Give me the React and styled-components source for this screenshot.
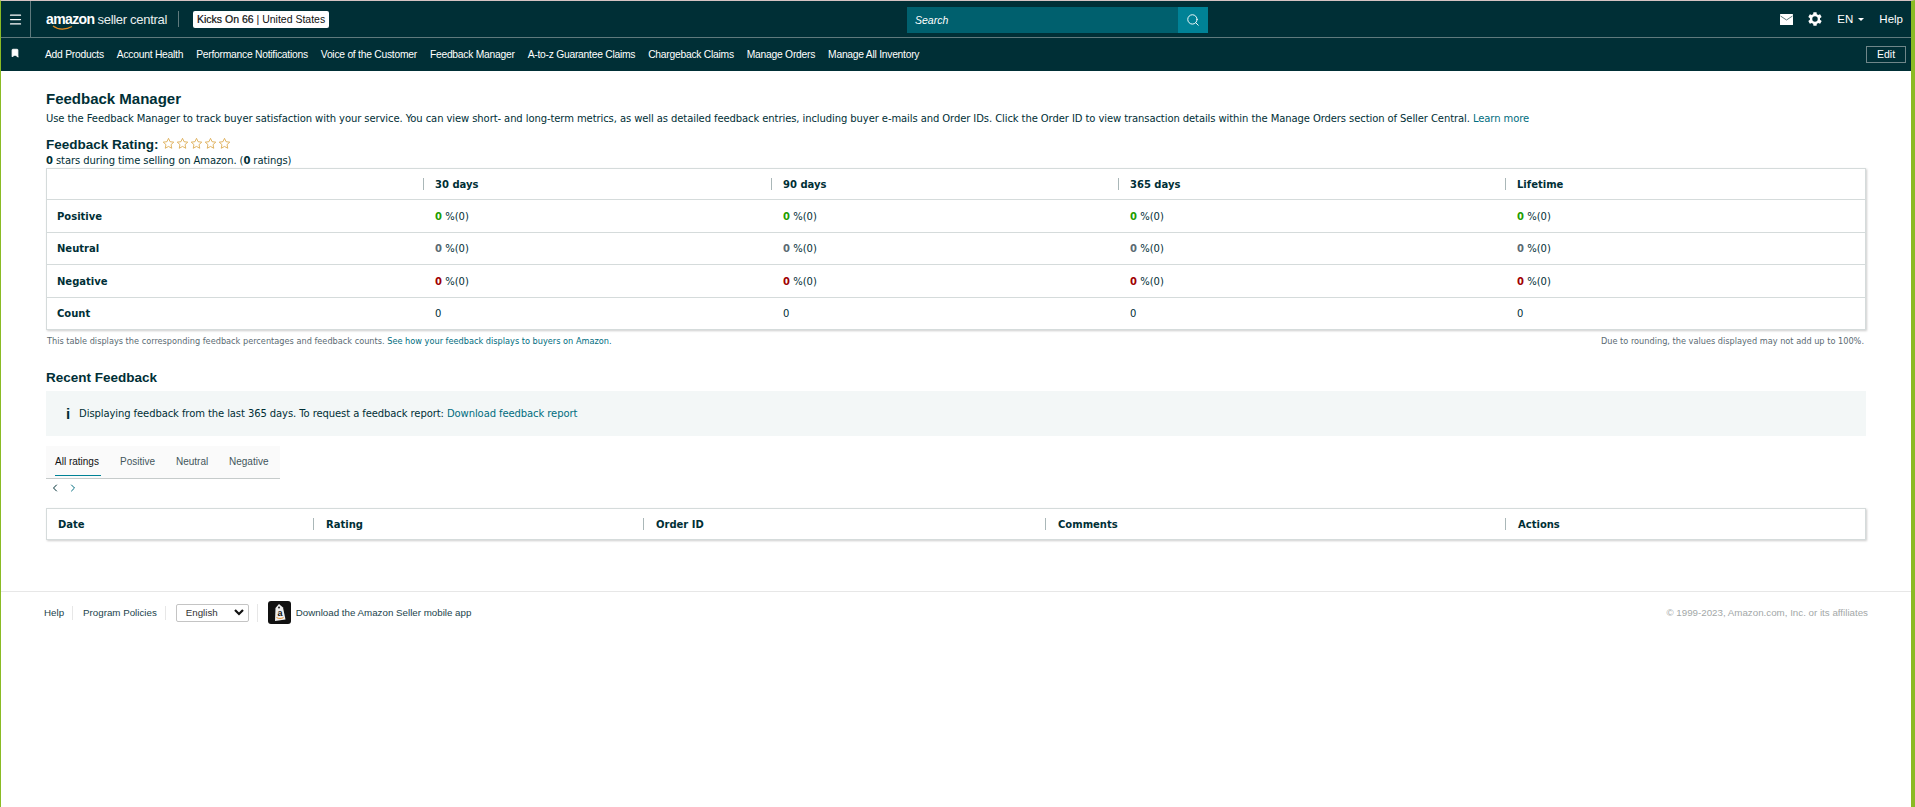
import React from "react";
import styled, { createGlobalStyle } from "styled-components";
import { Menu, Bookmark, Search, ChevronLeft, ChevronRight } from "lucide-react";

const GlobalStyle = createGlobalStyle`
  html, body {
    margin: 0;
    padding: 0;
    background: #fff;
  }
  body {
    font-family: "DejaVu Sans", Verdana, sans-serif;
    color: #002f36;
  }
`;

const Page = styled.div`
  box-sizing: border-box;
  width: 1915px;
  height: 807px;
  overflow: hidden;
  border-top: 1px solid #d5c3c3;
  border-left: 1px solid #8abb24;
  border-right: 4px solid #8abb24;
  background: #fff;
`;

const TopBar = styled.header`
  display: flex;
  align-items: center;
  height: 36px;
  background: #002f36;
  border-bottom: 1px solid #5f7a7d;
  font-family: "Liberation Sans", Arial, sans-serif;
  color: #fff;
`;

const TopLeft = styled.div`
  display: flex;
  align-items: center;
  flex: none;
  width: 906px;
`;

const MenuCell = styled.div`
  display: flex;
  align-items: center;
  justify-content: center;
  width: 29px;
  height: 36px;
  border-right: 1px solid #5f7a7d;
`;

const Logo = styled.div`
  position: relative;
  display: flex;
  align-items: baseline;
  gap: 3px;
  margin-left: 15px;
  width: 118px;
  height: 24px;
  white-space: nowrap;
`;

const LogoBold = styled.span`
  font-size: 14px;
  font-weight: 700;
  letter-spacing: -0.6px;
  line-height: 24px;
`;

const LogoThin = styled.span`
  font-size: 13px;
  letter-spacing: -0.3px;
  color: #e8eeee;
  line-height: 24px;
`;

const LogoSmile = styled.svg`
  position: absolute;
  left: 6px;
  top: 18px;
`;

const LogoDivider = styled.div`
  width: 1px;
  height: 16px;
  margin-left: 14px;
  background: #5f7a7d;
`;

const AccountPill = styled.div`
  margin-left: 14px;
  padding: 0 4px;
  height: 17px;
  line-height: 17px;
  background: #fff;
  border-radius: 2px;
  color: #0f1111;
  font-size: 10.5px;
  white-space: nowrap;
  b {
    font-weight: 400;
    -webkit-text-stroke: 0.2px #0f1111;
  }
`;

const SearchBox = styled.div`
  display: flex;
  flex: none;
  width: 301px;
  height: 26px;
  margin-top: 1px;
  background: #00606e;
`;

const SearchText = styled.span`
  flex: 1;
  padding-left: 8px;
  font-size: 10.5px;
  font-style: italic;
  line-height: 26px;
`;

const SearchButton = styled.div`
  display: flex;
  align-items: center;
  justify-content: center;
  width: 30px;
  background: #008296;
`;

const TopRight = styled.div`
  display: flex;
  align-items: center;
  gap: 15px;
  margin-left: auto;
  padding-right: 8px;
  font-size: 11.5px;
`;

const Lang = styled.span`
  display: flex;
  align-items: center;
  gap: 5px;
`;

const Caret = styled.span`
  width: 0;
  height: 0;
  border-left: 3px solid transparent;
  border-right: 3px solid transparent;
  border-top: 3px solid #fff;
`;

const NavBar = styled.nav`
  display: flex;
  align-items: center;
  height: 33px;
  background: #002f36;
  font-family: "Liberation Sans", Arial, sans-serif;
  font-size: 10.3px;
  color: #fff;
`;

const NavMark = styled.div`
  display: flex;
  justify-content: center;
  width: 28px;
  margin-right: 16px;
  margin-top: -3px;
`;

const NavItems = styled.div`
  display: flex;
  gap: 13px;
  white-space: nowrap;
  letter-spacing: -0.25px;
`;

const EditButton = styled.div`
  box-sizing: border-box;
  margin-left: auto;
  margin-right: 5px;
  width: 40px;
  height: 17px;
  line-height: 15px;
  text-align: center;
  border: 1px solid #6f8689;
  font-size: 10.5px;
`;

const Main = styled.main`
  padding: 0 45px 0 45px;
`;

const PageTitle = styled.h1`
  margin: 19px 0 0;
  font-family: "Liberation Sans", Arial, sans-serif;
  font-size: 15px;
  font-weight: 700;
  line-height: 18px;
`;

const BodyText = styled.div`
  font-size: 10px;
  line-height: 13px;
  letter-spacing: -0.09px;
  white-space: nowrap;
`;

const Intro = styled(BodyText)`
  margin-top: 4px;
`;

const Link = styled.a`
  color: #006d80;
`;

const RatingHeading = styled.div`
  display: flex;
  align-items: center;
  gap: 3px;
  margin-top: 11px;
  height: 17px;
`;

const RatingTitle = styled.h2`
  margin: 0;
  font-family: "Liberation Sans", Arial, sans-serif;
  font-size: 13.5px;
  font-weight: 700;
`;

const Stars = styled.div`
  display: flex;
  gap: 1px;
  margin-top: -3px;
`;

const RatingNote = styled(BodyText)`
  margin-top: 1px;
`;

const Table = styled.div`
  box-sizing: border-box;
  margin-top: 1px;
  border: 1px solid #d5dbdb;
  box-shadow: 1px 1px 2px rgba(0, 0, 0, 0.2);
  background: #fff;
`;

const Row = styled.div`
  display: grid;
  grid-template-columns: ${(props) => props.$columns};
  align-items: center;
  height: ${(props) => props.$height}px;
  border-top: ${(props) => (props.$first ? "none" : "1px solid #d5dbdb")};
  font-size: 10px;
`;

const HeadCell = styled.div`
  display: flex;
  align-items: center;
  height: 12px;
  padding-left: ${(props) => props.$pad || 11}px;
  font-weight: 700;
  border-left: ${(props) => (props.$first ? "none" : "1px solid #aab7b8")};
`;

const LabelCell = styled.div`
  padding-left: 10px;
  font-weight: 700;
`;

const ValueCell = styled.div`
  padding-left: 12px;
`;

const Zero = styled.b`
  color: ${(props) => props.$color};
`;

const NoteRow = styled.div`
  display: flex;
  justify-content: space-between;
  margin-top: 5px;
  padding: 0 2px 0 1px;
  font-size: 8.2px;
  line-height: 12px;
  color: #5b6b73;
`;

const SectionTitle = styled.h2`
  margin: 22px 0 0;
  font-family: "Liberation Sans", Arial, sans-serif;
  font-size: 13.5px;
  font-weight: 700;
  line-height: 17px;
`;

const InfoBox = styled(BodyText)`
  display: flex;
  align-items: center;
  gap: 9px;
  height: 45px;
  margin-top: 5px;
  padding-left: 20px;
  background: #f3f7f7;
`;

const InfoMark = styled.span`
  font-family: "Liberation Sans", Arial, sans-serif;
  font-size: 15px;
  font-weight: 700;
  color: #002f36;
`;

const Tabs = styled.div`
  display: flex;
  width: 234px;
  height: 32px;
  margin-top: 10px;
  background: #fafafa;
  border-bottom: 1px solid #c6cbcb;
  font-family: "Liberation Sans", Arial, sans-serif;
  font-size: 10px;
`;

const Tab = styled.div`
  box-sizing: border-box;
  flex: none;
  height: 30px;
  margin-left: ${(props) => props.$gap}px;
  padding-top: 10px;
  width: ${(props) => props.$width}px;
  white-space: nowrap;
  color: ${(props) => (props.$active ? "#0f1111" : "#44565c")};
  border-bottom: ${(props) => (props.$active ? "1px solid #008296" : "none")};
`;

const Pager = styled.div`
  display: flex;
  gap: 6px;
  margin: 1px 0 0 3px;
  height: 16px;
  align-items: center;
`;

const FeedbackTable = styled(Table)`
  margin-top: 12px;
`;

const Footer = styled.footer`
  display: flex;
  align-items: center;
  height: 41px;
  margin-top: 51px;
  padding: 0 43px 0 43px;
  border-top: 1px solid #e7e7e7;
  font-family: "Liberation Sans", Arial, sans-serif;
  font-size: 9.75px;
  color: #22444c;
`;

const FootLink = styled.span`
  padding-right: 8px;
  margin-right: 10px;
  line-height: 14px;
  border-right: 1px solid #e7e7e7;
`;

const FootSelect = styled.div`
  box-sizing: border-box;
  display: flex;
  align-items: center;
  justify-content: space-between;
  width: 73px;
  height: 18px;
  margin-right: 8px;
  padding: 0 4px 0 9px;
  border: 1px solid #c4c4c4;
  border-radius: 2px;
  color: #333;
`;

const FootDivider = styled.div`
  width: 1px;
  height: 18px;
  margin-right: 10px;
  background: #e7e7e7;
`;

const AppIcon = styled.svg`
  margin-right: 5px;
`;

const Copyright = styled.span`
  margin-left: auto;
  color: #a3a8a8;
`;

const topCols = "376px 348px 347px 387px 1fr";
const feedCols = "266px 330px 402px 460px 1fr";

const MailIcon = () => (
  <svg width="13" height="11" viewBox="0 0 13 11">
    <rect width="13" height="11" rx="0.5" fill="#fff" />
    <path d="M0.5 2 L6.5 6 L12.5 2" fill="none" stroke="#5f7a7d" strokeWidth="1" />
  </svg>
);

const GearIcon = () => (
  <svg width="14" height="14" viewBox="3 3 18 18" fill="#fff">
    <path d="M19.4 13a7.6 7.6 0 0 0 0-2l2.1-1.6-2-3.5-2.5 1a7.5 7.5 0 0 0-1.7-1L15 3.2h-4l-.4 2.7a7.5 7.5 0 0 0-1.7 1l-2.5-1-2 3.5L6.5 11a7.6 7.6 0 0 0 0 2l-2.1 1.6 2 3.5 2.5-1c.5.4 1.1.7 1.7 1l.4 2.7h4l.4-2.7c.6-.3 1.2-.6 1.7-1l2.5 1 2-3.5L19.4 13zM13 15.5a3.5 3.5 0 1 1 0-7 3.5 3.5 0 0 1 0 7z" transform="translate(-1 0)" fillRule="evenodd" />
  </svg>
);

const StarIcon = () => (
  <svg width="13" height="13" viewBox="0 0 24 24" fill="#fff" stroke="#dba94e" strokeWidth="1.6">
    <path d="M12 2.5l2.9 6.2 6.8.8-5 4.6 1.3 6.7-6-3.4-6 3.4 1.3-6.7-5-4.6 6.8-.8z" />
  </svg>
);

const percentRows = [
  { label: "Positive", color: "#1e9e00", height: 32 },
  { label: "Neutral", color: "#5b6b73", height: 31 },
  { label: "Negative", color: "#a00000", height: 32 },
];

function App() {
  return (
    <Page>
      <GlobalStyle />
      <TopBar>
        <TopLeft>
          <MenuCell>
            <Menu size={15} color="#fff" strokeWidth={2} />
          </MenuCell>
          <Logo>
            <LogoBold>amazon</LogoBold>
            <LogoThin>seller central</LogoThin>
            <LogoSmile width="22" height="6" viewBox="0 0 22 6">
              <path d="M1 1 C6 5 14 5 20 1.5" fill="none" stroke="#e88b1f" strokeWidth="1.2" />
            </LogoSmile>
          </Logo>
          <LogoDivider />
          <AccountPill>
            <b>Kicks On 66</b> | United States
          </AccountPill>
        </TopLeft>
        <SearchBox>
          <SearchText>Search</SearchText>
          <SearchButton>
            <Search size={14} color="#fff" strokeWidth={1.6} />
          </SearchButton>
        </SearchBox>
        <TopRight>
          <MailIcon />
          <GearIcon />
          <Lang>
            EN <Caret />
          </Lang>
          <span>Help</span>
        </TopRight>
      </TopBar>
      <NavBar>
        <NavMark>
          <Bookmark size={10} color="#fff" fill="#fff" />
        </NavMark>
        <NavItems>
          <span>Add Products</span>
          <span>Account Health</span>
          <span>Performance Notifications</span>
          <span>Voice of the Customer</span>
          <span>Feedback Manager</span>
          <span>A-to-z Guarantee Claims</span>
          <span>Chargeback Claims</span>
          <span>Manage Orders</span>
          <span>Manage All Inventory</span>
        </NavItems>
        <EditButton>Edit</EditButton>
      </NavBar>
      <Main>
        <PageTitle>Feedback Manager</PageTitle>
        <Intro>
          Use the Feedback Manager to track buyer satisfaction with your service. You can view short- and long-term metrics, as well as detailed feedback entries, including buyer e-mails and Order IDs. Click the Order ID to view transaction details within the Manage Orders section of Seller Central. <Link>Learn more</Link>
        </Intro>
        <RatingHeading>
          <RatingTitle>Feedback Rating:</RatingTitle>
          <Stars>
            <StarIcon />
            <StarIcon />
            <StarIcon />
            <StarIcon />
            <StarIcon />
          </Stars>
        </RatingHeading>
        <RatingNote>
          <b>0</b> stars during time selling on Amazon. (<b>0</b> ratings)
        </RatingNote>
        <Table>
          <Row $columns={topCols} $first $height={30}>
            <HeadCell $first />
            <HeadCell>30 days</HeadCell>
            <HeadCell>90 days</HeadCell>
            <HeadCell>365 days</HeadCell>
            <HeadCell>Lifetime</HeadCell>
          </Row>
          {percentRows.map((row) => (
            <Row key={row.label} $columns={topCols} $height={row.height}>
              <LabelCell>{row.label}</LabelCell>
              {[0, 1, 2, 3].map((i) => (
                <ValueCell key={i}>
                  <Zero $color={row.color}>0</Zero> %(0)
                </ValueCell>
              ))}
            </Row>
          ))}
          <Row $columns={topCols} $height={31}>
            <LabelCell>Count</LabelCell>
            <ValueCell>0</ValueCell>
            <ValueCell>0</ValueCell>
            <ValueCell>0</ValueCell>
            <ValueCell>0</ValueCell>
          </Row>
        </Table>
        <NoteRow>
          <span>
            This table displays the corresponding feedback percentages and feedback counts. <Link>See how your feedback displays to buyers on Amazon.</Link>
          </span>
          <span>Due to rounding, the values displayed may not add up to 100%.</span>
        </NoteRow>
        <SectionTitle>Recent Feedback</SectionTitle>
        <InfoBox>
          <InfoMark>i</InfoMark>
          <span>
            Displaying feedback from the last 365 days. To request a feedback report: <Link>Download feedback report</Link>
          </span>
        </InfoBox>
        <Tabs>
          <Tab $active $gap={9} $width={46}>All ratings</Tab>
          <Tab $gap={19} $width={34}>Positive</Tab>
          <Tab $gap={22} $width={30}>Neutral</Tab>
          <Tab $gap={23} $width={38}>Negative</Tab>
        </Tabs>
        <Pager>
          <ChevronLeft size={12} color="#002f36" strokeWidth={2} />
          <ChevronRight size={12} color="#006d80" strokeWidth={2} />
        </Pager>
        <FeedbackTable>
          <Row $columns={feedCols} $first $height={30}>
            <HeadCell $first>Date</HeadCell>
            <HeadCell $pad={12}>Rating</HeadCell>
            <HeadCell $pad={12}>Order ID</HeadCell>
            <HeadCell $pad={12}>Comments</HeadCell>
            <HeadCell $pad={12}>Actions</HeadCell>
          </Row>
        </FeedbackTable>
      </Main>
      <Footer>
        <FootLink>Help</FootLink>
        <FootLink>Program Policies</FootLink>
        <FootSelect>
          English
          <svg width="10" height="7" viewBox="0 0 10 7">
            <path d="M1 1 L5 5 L9 1" fill="none" stroke="#111" strokeWidth="2.2" />
          </svg>
        </FootSelect>
        <FootDivider />
        <AppIcon width="23" height="23" viewBox="0 0 23 23">
          <rect width="23" height="23" rx="3" fill="#111" />
          <path d="M7.5 7 L11 3 L15 6.5 L17.5 18.5 L7 20 Z" fill="#eee" />
          <circle cx="11" cy="6.5" r="0.9" fill="#111" />
          <text x="12" y="15" textAnchor="middle" fontSize="9" fontWeight="700" fontFamily="Liberation Sans" fill="#111">a</text>
          <path d="M8.5 16.5 C10.5 17.8 13.5 17.8 15.5 16.5" fill="none" stroke="#e88b1f" strokeWidth="0.9" />
        </AppIcon>
        <span>Download the Amazon Seller mobile app</span>
        <Copyright>© 1999-2023, Amazon.com, Inc. or its affiliates</Copyright>
      </Footer>
    </Page>
  );
}

export default App;
